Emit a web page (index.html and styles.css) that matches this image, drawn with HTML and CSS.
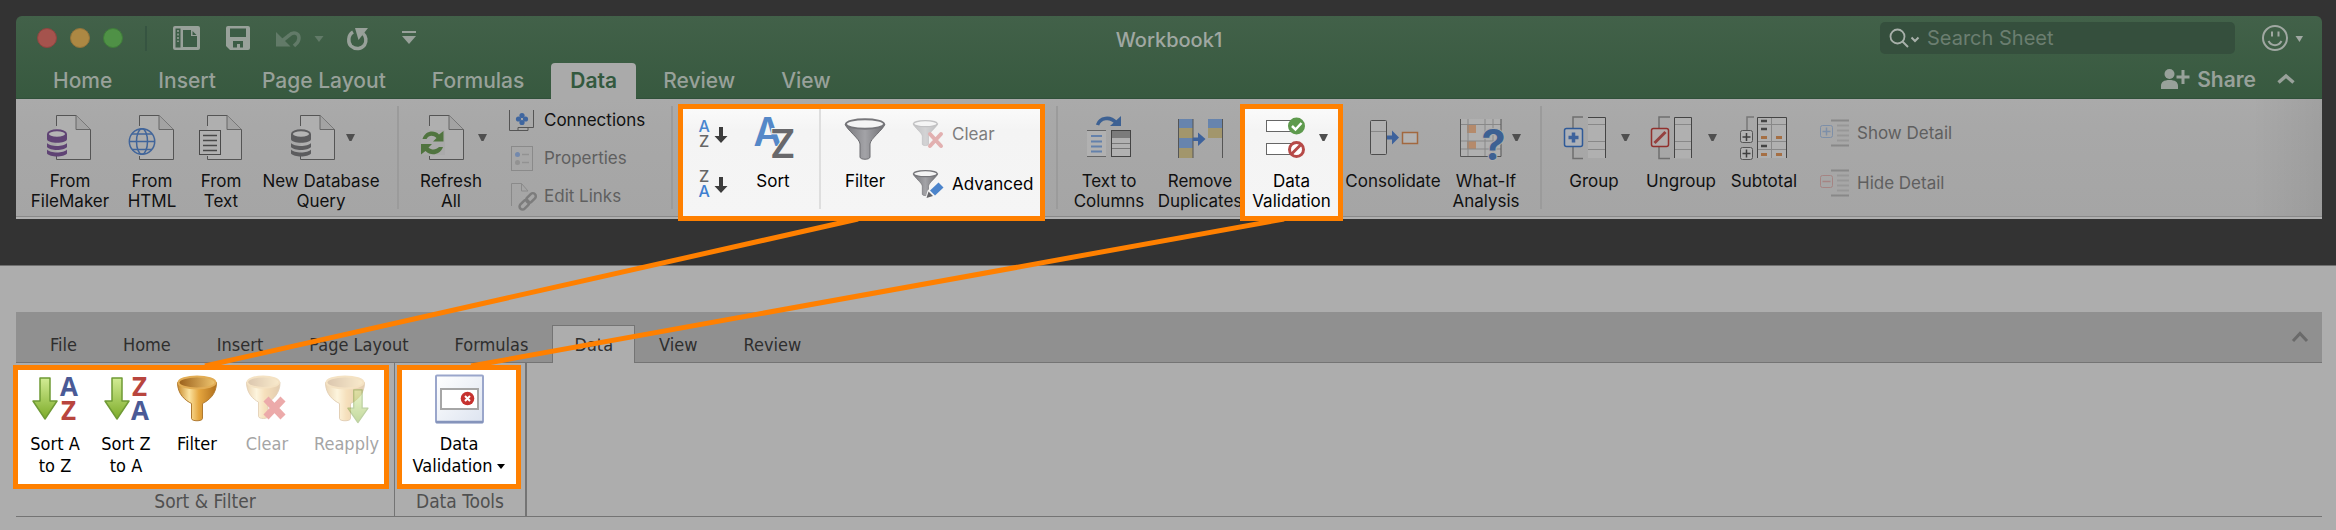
FILE: index.html
```html
<!DOCTYPE html>
<html lang="en">
<head>
<meta charset="utf-8">
<title>Workbook1</title>
<link rel="stylesheet" href="styles.css">
</head>
<body>
<svg class="defs" aria-hidden="true">
  <defs>
    <linearGradient id="steel" x1="0" x2="1" y1="0" y2="0"><stop offset="0" stop-color="#77777b"/><stop offset=".5" stop-color="#a3a3a7"/><stop offset="1" stop-color="#707074"/></linearGradient>
    <linearGradient id="gold" x1="0" x2="1" y1="0" y2="0"><stop offset="0" stop-color="#c98a2c"/><stop offset=".3" stop-color="#fbe3a0"/><stop offset=".55" stop-color="#e5a63f"/><stop offset="1" stop-color="#b06f1c"/></linearGradient>
    <linearGradient id="rim" x1="0" x2="1" y1="0" y2="0"><stop offset="0" stop-color="#9a5f1a"/><stop offset="1" stop-color="#f0c670"/></linearGradient>
    <linearGradient id="leaf" x1="0" x2="0" y1="0" y2="1"><stop offset="0" stop-color="#d2ec94"/><stop offset="1" stop-color="#7cab28"/></linearGradient>
    <linearGradient id="panel" x1="0" x2="1" y1="0" y2="1"><stop offset="0" stop-color="#ffffff"/><stop offset="1" stop-color="#dde4f0"/></linearGradient>
    <g id="doc">
      <path d="M.5 11V.5H20L34.500 14.500V44.500H.5V41" fill="#afafaf" stroke="#555" stroke-width="1"/>
      <path d="M20 .5V14.500H34.500" fill="#a3a3a3" stroke="#666"/>
    </g>
    <g id="drum">
      <path d="M0 5v5c0 5 20 5 20 0V5z"/>
      <ellipse cx="10" cy="5" rx="9" ry="3.800" fill="#b4b4b4" stroke="currentColor" stroke-width="2"/>
      <path d="M0 14c3 4 17 4 20 0v4c-3 4-17 4-20 0z"/>
      <path d="M0 20.500c3 4 17 4 20 0v4c-3 4-17 4-20 0z"/>
    </g>
    <path id="caret" d="M0 0h9L5.500 7h-2z" fill="#4f4f4f"/>
    <g id="funnel">
      <path d="M0 6C2 12 15 21 15 26V39c0 3 10 3 10 0V26C25 21 38 12 40 6z" fill="url(#steel)" stroke="#6c6c70" stroke-width="1"/>
      <ellipse cx="20" cy="6" rx="19" ry="4.800" fill="#f4f4f4" stroke="#76767a" stroke-width="2"/>
    </g>
    <g id="cup">
      <path d="M0 7C0 19 8 25 14 28V43c0 3 11 3 11 0V28C31 25 39 19 39 7z" fill="url(#gold)" stroke="#b07a30" stroke-width="1"/>
      <ellipse cx="19.500" cy="7" rx="18.500" ry="6" fill="url(#rim)" stroke="#e2ad55" stroke-width="2"/>
    </g>
    <path id="down" d="M8 1H18V24H25L13 42L1 24H8Z" fill="url(#leaf)" stroke="#6f9a35" stroke-width="1.500" stroke-linejoin="round"/>
    <g id="rows">
      <path d="M11 .5H29M11 25.500H29" stroke="#888" stroke-width="2"/>
      <path d="M17 5.500H29M17 10.500H29M17 15.500H29M17 20.500H29" stroke="#979797" stroke-width="2"/>
    </g>
  </defs>
</svg>

<section class="stage">
  <div class="excel">
    <header class="chrome">
      <div class="titlebar">
        <div class="quick">
          <span class="light red"></span><span class="light amber"></span><span class="light green"></span>
          <span class="rule"></span>
          <button class="bare" aria-label="Templates"><svg width="28" height="26" viewBox="173 25 28 26"><rect x="173" y="26" width="27" height="24" rx="2" fill="#98a19a"/><path d="M175.500 28.500h5v19h-5zM183 30h8v6h6v11h-14z" fill="#3c5d46"/><path d="M192.500 31v4h4z" fill="#3c5d46"/><path d="M178 30v12" stroke="#98a19a" stroke-width="1.500" stroke-dasharray="2 1.500"/></svg></button>
          <button class="bare save" aria-label="Save"><svg width="26" height="26" viewBox="225 25 26 26"><path d="M228 26h20q2 0 2 2v20q0 2-2 2h-18l-4-4V28q0-2 2-2z" fill="#98a19a"/><path d="M230 28.500h16V37h-16zM233 41h10v6.500h-3V44h-3v3.500h-4z" fill="#3c5d46"/></svg></button>
          <button class="bare undo" aria-label="Undo"><svg width="50" height="26" viewBox="275 25 50 26"><path d="M276 32v14.500h14.500z" fill="#627a68"/><path d="M282 41L289 35.500C293 31 299 33 299 38C299 42 297 43 294 46" fill="none" stroke="#627a68" stroke-width="3.500"/><path d="M314.500 36h9l-4.500 6z" fill="#627a68"/></svg></button>
          <button class="bare redo" aria-label="Repeat"><svg width="24" height="26" viewBox="346 25 24 26"><path d="M353 32C347.500 35 348 43 351 46C356 50.500 362 48.500 364.500 45C367 41 366 36 363 33.500" fill="none" stroke="#98a19a" stroke-width="3.500"/><path d="M355 28h13l-9.500 12z" fill="#98a19a"/></svg></button>
          <button class="bare" aria-label="Customize toolbar"><svg width="16" height="26" viewBox="401 25 16 26"><path d="M402 31h14v2h-14zM402 36h14l-7 8z" fill="#98a19a"/></svg></button>
        </div>
        <h1>Workbook1</h1>
        <div class="finder">
          <label class="search">
            <svg width="34" height="22" viewBox="1888 26 34 22" aria-hidden="true"><circle cx="1897.500" cy="35.500" r="7" fill="none" stroke="#a8b0aa" stroke-width="1.800"/><path d="M1902.500 40.500L1908 46" stroke="#a8b0aa" stroke-width="2"/><path d="M1911.500 36.500l3.500 3.500 3.500-3.500" fill="none" stroke="#a8b0aa" stroke-width="2"/></svg>
            <input type="text" placeholder="Search Sheet" aria-label="Search Sheet">
          </label>
          <button class="bare" aria-label="Feedback"><svg width="44" height="28" viewBox="2261 24 44 28"><circle cx="2275" cy="38" r="12" fill="none" stroke="#a0a8a2" stroke-width="2"/><path d="M2272 31.500v5M2278.500 31.500v5" stroke="#a0a8a2" stroke-width="2"/><path d="M2268.500 41c3 5.500 10 5.500 13 0" fill="none" stroke="#a0a8a2" stroke-width="2"/><path d="M2295.500 36h7.500l-3.500 6z" fill="#a0a8a2"/></svg></button>
        </div>
      </div>
      <div class="tabrow">
        <nav class="tabs">
          <button>Home</button><button>Insert</button><button>Page Layout</button><button>Formulas</button><button class="on">Data</button><button>Review</button><button>View</button>
        </nav>
        <div class="share">
          <button><svg width="30" height="22" viewBox="2161 68 30 22" aria-hidden="true"><circle cx="2170.500" cy="74" r="5" fill="#98a19a"/><path d="M2162 89v-3c0-4 3-6 8.500-6s8.500 2 8.500 6v3zM2182.500 70h3v5.500h5v3h-5v5.500h-3v-5.500h-5v-3h5z" fill="#98a19a"/></svg>Share</button>
          <button aria-label="Collapse ribbon"><svg width="18" height="12" viewBox="2277 73 18 12"><path d="M2278.500 82.500l7.500-6.500 7.500 6.500" fill="none" stroke="#98a19a" stroke-width="3.500"/></svg></button>
        </div>
      </div>
    </header>

    <div class="ribbon">
      <div class="group sources">
        <button class="tool"><svg width="48" height="54" viewBox="46 110 48 54"><use href="#doc" x="56" y="115"/><g fill="#5f4374" color="#5f4374"><use href="#drum" x="47" y="129"/></g></svg>From<br>FileMaker</button>
        <button class="tool"><svg width="48" height="54" viewBox="127 110 48 54"><use href="#doc" x="138" y="115"/><circle cx="141" cy="141.500" r="14" fill="#acacac"/><g fill="none" stroke="#41659a" stroke-width="1.500"><circle cx="141" cy="141.500" r="12.700"/><ellipse cx="141" cy="141.500" rx="5.500" ry="12.700"/><path d="M128 141.500h26M131 134h20M131 149.500h20"/></g></svg>From<br>HTML</button>
        <button class="tool"><svg width="48" height="54" viewBox="197 110 48 54"><use href="#doc" x="207" y="115"/><rect x="199.500" y="130.500" width="21" height="24" fill="#b0b0b0" stroke="#4a4a4a"/><path d="M203 135.500h14M203 140.500h14M203 145.500h14M203 150.500h14" stroke="#484848" stroke-width="1.500"/></svg>From<br>Text</button>
        <button class="tool"><svg width="68" height="54" viewBox="287 110 68 54"><use href="#doc" x="300" y="115"/><g fill="#5c5c5e" color="#5c5c5e"><use href="#drum" x="291" y="129"/></g><use href="#caret" x="346" y="134"/></svg>New Database<br>Query</button>
      </div>
      <div class="group refresh">
        <button class="tool"><svg width="74" height="54" viewBox="414 110 74 54"><use href="#doc" x="429" y="115"/><path d="M421 130h24v25h-24z" fill="#aaa"/><path d="M422.500 139C425 131 434 129.500 439 134.500L443.500 131V141.500H433L436.500 138C433 135 429 135 426.500 139ZM421 144H432L428.500 147.500C432 150.500 436 150 439 147H443C440 155 431 156.500 425.500 151L421 154.500Z" fill="#50743f"/><use href="#caret" x="478" y="134"/></svg>Refresh<br>All</button>
        <div class="list three">
          <button class="line"><svg width="28" height="28" viewBox="509 105 28 28"><path d="M509.500 109v20.500H528v-3h5.500V109M518 129.500v-3h10" fill="none" stroke="#555"/><g fill="#3f669f"><circle cx="522" cy="114.500" r="2.600"/><circle cx="522" cy="121.500" r="2.600"/><circle cx="518.500" cy="118" r="2.600"/><circle cx="525.500" cy="118" r="2.600"/></g></svg>Connections</button>
          <button class="line off" disabled><svg width="28" height="28" viewBox="509 143 28 28"><rect x="511.500" y="145.500" width="21" height="24" fill="none" stroke="#8a8a8a"/><circle cx="517.500" cy="153.500" r="2.500" fill="#7389ad"/><circle cx="517.500" cy="161.500" r="2.500" fill="#929292"/><path d="M522 153.500h7M522 161.500h7" stroke="#929292" stroke-width="1.500"/></svg>Properties</button>
          <button class="line off" disabled><svg width="28" height="28" viewBox="509 182 28 28"><path d="M511.500 206V183.500h10l6.500 7.500M521.500 183.500V191h6.500" fill="none" stroke="#8a8a8a"/><g fill="none" stroke="#7c7c7c" stroke-width="2.500" transform="rotate(-45 527.500 201.500)"><rect x="517.500" y="198.500" width="11" height="6" rx="3"/><rect x="527" y="198.500" width="11" height="6" rx="3"/></g></svg>Edit Links</button>
        </div>
      </div>
      <div class="group spotlight sorting">
        <div class="stack">
          <button aria-label="Sort ascending"><svg width="36" height="34" viewBox="695 116 36 34"><text class="glyph" x="698.500" y="131" fill="#4a86cf">A</text><text class="glyph" x="699" y="146" fill="#666">Z</text><path d="M719 126h4v9h4.500l-6.500 7-6.500-7h4.500z" fill="#3c3c3c"/></svg></button>
          <button aria-label="Sort descending"><svg width="36" height="34" viewBox="695 166 36 34"><text class="glyph" x="699" y="181" fill="#666">Z</text><text class="glyph" x="698.500" y="196" fill="#3f7fd0">A</text><path d="M719 176h4v9h4.500l-6.500 7-6.500-7h4.500z" fill="#3c3c3c"/></svg></button>
        </div>
        <button class="tool"><svg width="48" height="54" viewBox="749 110 48 54"><text class="bigglyph" x="753.500" y="146" fill="#5588c8">A</text><text class="bigglyph" x="770" y="158" fill="#68686b" stroke="#f6f6f6" stroke-width="2" paint-order="stroke">Z</text></svg>Sort</button>
        <span class="split"></span>
        <button class="tool"><svg width="48" height="54" viewBox="841 110 48 54"><use href="#funnel" x="845" y="118"/></svg>Filter</button>
        <div class="list">
          <button class="line off" disabled><svg width="32" height="32" viewBox="913 117 32 32"><g opacity=".4"><use href="#funnel" transform="translate(913 119) scale(.62)"/></g><path d="M930 133l11 12M941 133l-11 12" stroke="#e2b0b0" stroke-width="4" stroke-linecap="round"/></svg>Clear</button>
          <button class="line"><svg width="32" height="32" viewBox="913 167 32 32"><use href="#funnel" transform="translate(913 169) scale(.62)"/><path d="M926.500 197l2-7 11-10 5 5-11 10z" fill="#f5f5f5" stroke="#f5f5f5" stroke-width="2"/><path d="M926.500 197l2-6.500 4.500 4.500z" fill="#66666a"/><path d="M930 189.500l8.500-8 5 5-8.500 8z" fill="#4c84cb"/></svg>Advanced</button>
        </div>
      </div>
      <div class="group columns">
        <button class="tool"><svg width="48" height="54" viewBox="1085 110 48 54"><path d="M1097.500 125C1100 117.500 1110 116 1116 122.500" fill="none" stroke="#3d6193" stroke-width="3.500"/><path d="M1121 116v10h-11z" fill="#3d6193"/><rect x="1087" y="130" width="19" height="26" fill="#b1b1b1"/><path d="M1087 130.500h19M1087 156.500h19" stroke="#666"/><path d="M1091 136h11M1091 141.500h11M1091 146.500h11M1091 151.500h11" stroke="#6481ab" stroke-width="2"/><rect x="1111.500" y="130.500" width="19" height="26" fill="#b1b1b1" stroke="#444"/><path d="M1112 131h18v7h-18z" fill="#7b7b7b"/><path d="M1112 143.500h18M1112 148.500h18" stroke="#777"/></svg>Text to<br>Columns</button>
        <button class="tool"><svg width="48" height="54" viewBox="1176 110 48 54"><path d="M1178 119h15v9h-15zM1178 138h15v10h-15zM1208 119h15v9h-15z" fill="#6784ad"/><path d="M1178 128h15v10h-15zM1178 148h15v10h-15zM1208 128h15v10h-15z" fill="#a2966c"/><path d="M1178.500 119v39M1193 119v39M1222.500 119v39" stroke="#555"/><path d="M1193 137.500h5v-5l7.500 6.500-7.500 7v-5h-5z" fill="#3d629c"/></svg>Remove<br>Duplicates</button>
      </div>
      <div class="group spotlight validation">
        <button class="tool"><svg width="74" height="54" viewBox="1255 110 74 54"><g fill="#fff" stroke="#666"><rect x="1266.500" y="120.500" width="28" height="11"/><rect x="1266.500" y="143.500" width="28" height="11"/></g><circle cx="1296.500" cy="126" r="8.500" fill="#5e9a4d"/><path d="M1292 126l3.500 3.500 6-6.500" fill="none" stroke="#fff" stroke-width="2.500"/><circle cx="1296.500" cy="149.500" r="7" fill="#fff" stroke="#b64a48" stroke-width="3"/><path d="M1301 144.500l-9.500 9.500" stroke="#b64a48" stroke-width="3"/><use href="#caret" x="1319" y="134"/></svg>Data<br>Validation</button>
      </div>
      <div class="group analysis">
        <button class="tool"><svg width="50" height="54" viewBox="1368 110 50 54"><rect x="1370.500" y="120.500" width="16" height="34" rx="1" fill="#b0b0b0" stroke="#4c4c4c"/><path d="M1371 131.500h15" stroke="#888"/><path d="M1387 135.500h5v-5l7 7-7 7v-5h-5z" fill="#3d629c"/><rect x="1402.500" y="132.500" width="15" height="11" fill="#b3b3b3" stroke="#a2683f" stroke-width="1.500"/></svg>Consolidate</button>
        <button class="tool"><svg width="66" height="54" viewBox="1453 110 66 54"><path d="M1461 119h40v37h-40z" fill="#b0b0b0"/><path d="M1467 125h9v8h-9zM1467 141h9v8h-9z" fill="#b58a6b"/><path d="M1468 119v37M1485 119v37M1493 119v37M1461 124.500h40M1461 141h40M1461 149h40" stroke="#888"/><path d="M1460.500 119v37.500h40.500V119" fill="none" stroke="#555"/><text class="query" x="1481.500" y="160" fill="#3d6193" stroke="#acacac" stroke-width="2" paint-order="stroke">?</text><use href="#caret" x="1512" y="134"/></svg>What-If<br>Analysis</button>
      </div>
      <div class="group outline">
        <button class="tool"><svg width="72" height="54" viewBox="1558 110 72 54"><path d="M1583 117H1573V158.500H1583" fill="none" stroke="#6f6f6f" stroke-width="1.500"/><rect x="1588" y="117" width="18" height="41" fill="#b0b0b0"/><path d="M1588 124.500h18M1588 141.500h18M1588 149.500h18" stroke="#888"/><path d="M1588 117.500h17.500V158" fill="none" stroke="#444"/><rect x="1564.500" y="128.500" width="18" height="18" rx="2" fill="#adb1b7" stroke="#2f5a98" stroke-width="1.500"/><path d="M1573.500 132.500v10M1568.500 137.500h10" stroke="#3d629c" stroke-width="3.500"/><use href="#caret" x="1621" y="134"/></svg>Group</button>
        <button class="tool"><svg width="72" height="54" viewBox="1645 110 72 54"><path d="M1670 117h-11V158.500h11" fill="none" stroke="#6f6f6f" stroke-width="1.500"/><rect x="1674.500" y="117.500" width="17" height="41" fill="#b0b0b0"/><path d="M1675 124.500h17M1675 141.500h17M1675 149.500h17" stroke="#888"/><path d="M1674.500 158V117.500h17V158" fill="none" stroke="#444"/><rect x="1651.500" y="128.500" width="17" height="18" rx="2" fill="#b2adad" stroke="#91302d" stroke-width="1.500"/><path d="M1665.500 132l-11 11" stroke="#95403f" stroke-width="3"/><use href="#caret" x="1708" y="134"/></svg>Ungroup</button>
        <button class="tool"><svg width="50" height="54" viewBox="1739 110 50 54"><path d="M1754 117h-7V130" fill="none" stroke="#777" stroke-width="1.500"/><path d="M1757.500 158V117.500h29V158" fill="#b0b0b0" stroke="#444"/><path d="M1758 124.500h28M1758 141.500h28M1758 149.500h28M1771.500 118v40" stroke="#888"/><path d="M1761 121h6M1761 129h6M1761 146h6" stroke="#444" stroke-width="2.500"/><path d="M1761 137.500h6M1776 137.500h6M1761 154.500h6M1776 154.500h6" stroke="#a56f44" stroke-width="3"/><g fill="#b2b2b2" stroke="#555"><rect x="1740.500" y="130.500" width="12" height="12" rx="2"/><rect x="1740.500" y="147.500" width="12" height="12" rx="2"/></g><path d="M1746.500 133v8M1742.500 137h8M1746.500 149.500v8M1742.500 153.500h8" stroke="#3f3f3f" stroke-width="1.500"/></svg>Subtotal</button>
        <div class="list">
          <button class="line off" disabled><svg width="29" height="28" viewBox="1820 119 29 28"><use href="#rows" x="1820" y="120"/><rect x="1820.500" y="125.500" width="12" height="12" rx="2" fill="none" stroke="#7d8fa8"/><path d="M1826.500 127.500v8M1822.500 131.500h8" stroke="#7d8fa8" stroke-width="1.500"/></svg>Show Detail</button>
          <button class="line off" disabled><svg width="29" height="28" viewBox="1820 169 29 28"><use href="#rows" x="1820" y="170"/><rect x="1820.500" y="175.500" width="12" height="12" rx="2" fill="none" stroke="#a58483"/><path d="M1822.500 181.500h8" stroke="#a58483" stroke-width="1.500"/></svg>Hide Detail</button>
        </div>
      </div>
    </div>
    <div class="sheetedge"></div>
  </div>
</section>

<section class="web">
  <div class="bar">
    <nav class="webtabs">
      <button>File</button><button>Home</button><button>Insert</button><button>Page Layout</button><button>Formulas</button><button class="on">Data</button><button>View</button><button>Review</button>
    </nav>
    <button class="fold" aria-label="Collapse ribbon"><svg width="14" height="14" viewBox="0 0 14 14"><path d="M0 11l7-7.500L14 11" fill="none" stroke="#6a6a6a" stroke-width="3"/></svg></button>
  </div>
  <div class="panel">
    <div class="set">
      <div class="spotlight sortset">
        <button class="cmd"><svg width="50" height="54" viewBox="31 372 50 54"><use href="#down" x="33" y="377"/><text class="duo" x="61" y="396" fill="#4a5a96">A</text><text class="duo" x="62" y="420" fill="#b8453e">Z</text></svg>Sort A<br>to Z</button>
        <button class="cmd"><svg width="50" height="54" viewBox="101 372 50 54"><use href="#down" x="104" y="377"/><text class="duo" x="132" y="396" fill="#b8453e">Z</text><text class="duo" x="131" y="420" fill="#4a5a96">A</text></svg>Sort Z<br>to A</button>
        <button class="cmd"><svg width="44" height="54" viewBox="175 372 44 54"><use href="#cup" x="177.500" y="375.500"/></svg>Filter</button>
        <button class="cmd off" disabled><svg width="44" height="54" viewBox="245 372 44 54"><g opacity=".35"><use href="#cup" transform="translate(246.500 375.500) scale(.86 .95)"/></g><path d="M266 399l17 18M283 399l-17 18" stroke="#ecaaaa" stroke-width="7"/></svg>Clear</button>
        <button class="cmd off last" disabled><svg width="46" height="54" viewBox="325 372 46 54"><g opacity=".35"><use href="#cup" x="326.500" y="375.500"/></g><g opacity=".45"><use href="#down" transform="translate(348 389) scale(.84 .8)"/></g></svg>Reapply</button>
      </div>
      <p class="caption">Sort &amp; Filter</p>
    </div>
    <div class="set tools">
      <div class="spotlight toolset">
        <button class="cmd"><svg width="50" height="54" viewBox="434 372 50 54"><rect x="436" y="375.500" width="47" height="47" rx="1" fill="url(#panel)" stroke="#9aa6cb" stroke-width="2"/><path d="M436 422h47" stroke="#8594bb" stroke-width="2.500"/><rect x="441" y="389" width="37" height="20" fill="#fff" stroke="#a6a6a6" stroke-width="2"/><circle cx="467.500" cy="398.500" r="6.800" fill="#c6322f"/><path d="M465 396l5 5M470 396l-5 5" stroke="#fff" stroke-width="2"/></svg>Data<br><span class="drop">Validation<svg width="8" height="5" viewBox="0 0 8 5"><path d="M0 0h8L4 5z"/></svg></span></button>
      </div>
      <p class="caption">Data Tools</p>
    </div>
  </div>
</section>

<svg class="links" width="2336" height="530" viewBox="0 0 2336 530" aria-hidden="true">
  <path d="M858 219L205 366M1284 219L471 366"/>
</svg>
</body>
</html>
```

FILE: styles.css
```css
* { box-sizing: border-box; }
body {
  margin: 0;
  min-height: 100vh;
  position: relative;
  overflow-x: hidden;
  background: #adadad;
  font-family: Inter, "Liberation Sans", sans-serif;
  color: #111;
}
button {
  margin: 0;
  padding: 0;
  border: 0;
  background: none;
  font: inherit;
  color: inherit;
  white-space: nowrap;
}
svg { display: block; flex: none; overflow: visible; }
.defs { position: absolute; width: 0; height: 0; overflow: hidden; }
.links { position: absolute; top: 0; left: 0; pointer-events: none; z-index: 2; }
.links path { fill: none; stroke: #ff8000; stroke-width: 5; }

/* Desktop window */
.stage { background: #333; padding: 16px 14px 46px 16px; }
.chrome {
  background: linear-gradient(#426149, #37593f);
  border-radius: 6px 6px 0 0;
  color: #98a19a;
}
.titlebar {
  display: grid;
  grid-template-columns: 1fr auto 1fr;
  align-items: center;
  height: 47px;
}
.quick { display: flex; align-items: center; padding: 0 0 3px 21px; }
.light { width: 20px; height: 20px; border-radius: 50%; margin-right: 13px; }
.red { background: #a5534d; border: 1px solid #8f4440; }
.amber { background: #ac8843; border: 1px solid #93733a; }
.green { background: #4f9146; border: 1px solid #3f7d3a; }
.rule { width: 2px; height: 25px; margin: 0 26px 0 9px; background: #365441; }
.save { margin-left: 24px; }
.undo { margin-left: 24px; }
.redo { margin: 0 31px 0 21px; }
h1 { margin: 0; font-size: 20px; line-height: 24px; font-weight: 500; color: #a0a8a2; }
.finder { display: flex; justify-content: flex-end; align-items: center; gap: 26px; padding: 0 17px 3px 0; }
.search {
  display: flex;
  align-items: center;
  gap: 5px;
  width: 355px;
  height: 32px;
  padding: 0 8px;
  border-radius: 5px;
  background: #354f3d;
}
.search input {
  flex: 1;
  min-width: 0;
  padding: 0;
  border: 0;
  outline: 0;
  background: none;
  font: 400 20px/24px Inter, "Liberation Sans", sans-serif;
  color: #a8b0aa;
}
.search input::placeholder { color: #6b7e70; opacity: 1; }
.tabrow { display: flex; justify-content: space-between; height: 36px; border-bottom: 1px solid #30503a; }
.tabs { display: flex; gap: 8px; padding-left: 18px; }
.tabs button { height: 36px; padding: 0 19px 2px; border-radius: 4px 4px 0 0; font-size: 21px; font-weight: 500; }
.tabs .on { background: #aaa; color: #33593e; font-weight: 600; }
.share { display: flex; align-items: center; gap: 21px; padding: 0 27px 3px 0; font-size: 21px; font-weight: 600; }
.share button { display: flex; align-items: center; gap: 7px; }

/* Desktop ribbon */
.ribbon {
  display: flex;
  height: 117px;
  background:
    linear-gradient(90deg, transparent calc(100% - 70px), #0000000f),
    linear-gradient(#aaa, #a8a8a8 24%, #a5a5a5);
  font-size: 17px;
  line-height: 20px;
}
.sheetedge { height: 3px; border-top: 1px solid #898989; background: #b0b0b0; }
.group { position: relative; display: grid; align-items: start; justify-content: start; }
.tool {
  display: flow-root;
  justify-self: center;
  padding-top: 11px;
  line-height: 20px;
  text-align: center;
}
.tool svg { margin: 0 auto 7px; }
.sources { grid-template-columns: 96px 68px 70px 130px; padding: 0 11px 0 6px; }
.refresh { grid-template-columns: 82px 162px; column-gap: 17px; padding-left: 13px; }
.columns { grid-template-columns: 102px 80px; margin-left: 11px; padding-left: 2px; }
.analysis { grid-template-columns: 100px 86px; }
.outline { grid-template-columns: 92px 82px 84px auto; margin-left: 11px; padding-left: 8px; }
.refresh::before, .columns::before, .outline::before, .refresh::after {
  content: "";
  position: absolute;
  top: 7px;
  left: 0;
  width: 2px;
  height: 103px;
  background: #9b9b9b;
}
.refresh::after { left: auto; right: -2px; }
.list { display: grid; grid-auto-rows: 50px; padding-top: 9px; }
.three { grid-auto-rows: 38px; padding-top: 2px; }
.line { display: flex; align-items: center; gap: 7px; }
.outline .list { padding-left: 14px; }
.outline .line { gap: 8px; }
.off { color: #5f5f5f; }

/* Highlighted areas */
.spotlight { border: 5px solid #ff8000; }
.ribbon .spotlight { margin: 5px 0 -5px; background: linear-gradient(#fafafa, #f4f4f4 20%, #f5f5f5); color: #000; z-index: 1; }
.ribbon .spotlight .tool { padding-top: 1px; }
.spotlight .list { padding: 0 7px 0 4px; }
.ribbon .spotlight.sorting { grid-template-columns: 59px 62px 17px 88px 131px; margin-left: 7px; }
.sorting .off { color: #7d7d7d; }
.ribbon .spotlight.validation { grid-template-columns: 93px; }
.stack { display: grid; grid-auto-rows: 50px; justify-items: center; }
.split { justify-self: end; width: 2px; height: 100px; background: #dedede; }
.glyph { font: 500 16px Inter, sans-serif; }
.bigglyph { font: 600 39px Inter, sans-serif; }
.query { font: 700 43px Inter, sans-serif; }
.duo { font: 700 26px "Open Sans", sans-serif; }

/* Web ribbon */
.web {
  padding: 46px 14px 13px 16px;
  border-top: 1px solid #707070;
  font-family: "DejaVu Sans Condensed", "Noto Sans", sans-serif;
  font-size: 18px;
  line-height: 22px;
}
.bar {
  display: flex;
  justify-content: space-between;
  align-items: flex-end;
  height: 51px;
  background: #909090;
  border-bottom: 1px solid #747474;
  color: #2e2e2e;
}
.webtabs { display: flex; gap: 2px; padding-left: 12px; }
.webtabs button { height: 38px; padding: 0 21px; border: 1px solid transparent; border-bottom: 0; margin-bottom: -1px; }
.webtabs .on { background: #adadad; border-color: #747474; }
.fold { align-self: center; padding: 0 15px 0 0; }
.panel { display: flex; border-bottom: 1px solid #747474; }
.set { padding-top: 2px; border-right: 1px solid #747474; }
.tools { border-right-width: 2px; }
.web .spotlight { display: grid; position: relative; padding: 2px 0 7px; background: #fff; color: #000; }
.sortset { grid-template-columns: 74px 68px 74px 66px 84px; margin: 0 5px 0 -3px; }
.toolset { grid-template-columns: 114px; margin: 0 4px 0 2px; }
.cmd { display: flow-root; align-self: start; line-height: 22px; text-align: center; }
.cmd > svg { margin: 0 auto 7px; }
.cmd.off { color: #a5a5a5; }
.cmd.last { justify-self: end; padding-right: 5px; }
.drop { display: inline-flex; align-items: center; gap: 5px; }
.caption { margin: 0; padding-bottom: 2px; font-size: 19px; line-height: 25px; text-align: center; color: #505050; }
```
